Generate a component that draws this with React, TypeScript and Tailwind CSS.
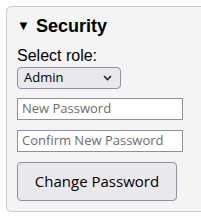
import React from "react";

export default function App() {
  return (
    <div className="p-[6px] bg-white h-[217px] overflow-hidden font-['Liberation_Sans',Arial,sans-serif]">
      <div className="w-[220px] border border-[#cccccc] rounded-[5px] bg-[#f4f4f4] pl-[10px] pt-[9px] pb-[10px] flex flex-col items-start">
        <div className="text-[18px] leading-[20px] font-bold text-black flex items-center">
          <span className="text-[13px] mr-[6px]">▼</span>
          <span>Security</span>
        </div>
        <div className="mt-[11px] text-[16px] leading-[18px] text-black">Select role:</div>
        <div className="mt-[2px] w-[104px] h-[22px] border border-[#8f8f9d] rounded-[4px] bg-[#e9e9ed] flex items-center justify-between pl-[6px] pr-[8px] text-[13px] text-black font-['Open_Sans','Noto_Sans',sans-serif]">
          <span>Admin</span>
          <svg width="9" height="6" viewBox="0 0 9 6" fill="none">
            <path d="M1 1 L4.5 4.5 L8 1" stroke="#222" strokeWidth="1.6" />
          </svg>
        </div>
        <div className="mt-[9px] w-[166px] h-[22px] border border-[#8f8f9d] bg-white flex items-center pl-[4px] text-[13px] text-[#6d6d6d] font-['Open_Sans','Noto_Sans',sans-serif]">
          New Password
        </div>
        <div className="mt-[10px] w-[166px] h-[22px] border border-[#8f8f9d] bg-white flex items-center pl-[4px] text-[13px] text-[#6d6d6d] font-['Open_Sans','Noto_Sans',sans-serif]">
          Confirm New Password
        </div>
        <div className="mt-[10px] w-[160px] h-[39px] border border-[#8f8f9d] rounded-[4px] bg-[#e9e9ed] flex items-center justify-center text-[15px] text-black font-['Open_Sans','Noto_Sans',sans-serif]">
          Change Password
        </div>
      </div>
    </div>
  );
}
